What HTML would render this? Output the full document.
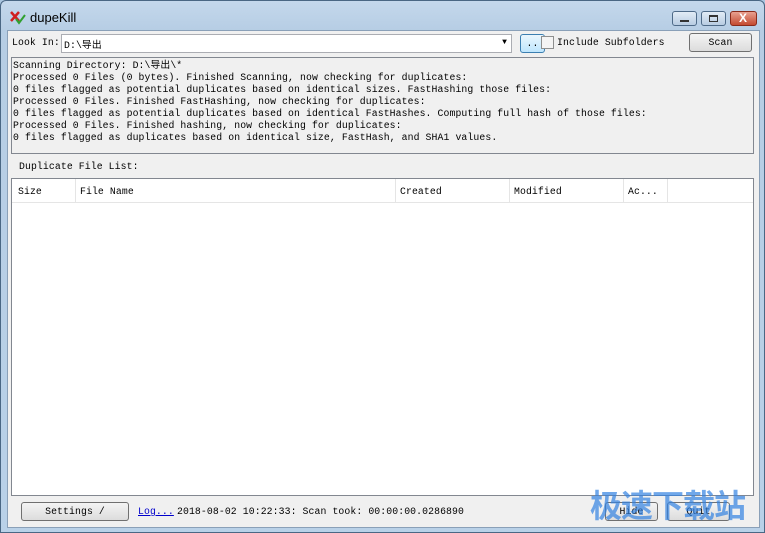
<!DOCTYPE html>
<html><head><meta charset="utf-8"><style>
body{margin:0;width:765px;height:533px;overflow:hidden;background:#aac6e0;font-family:"Liberation Mono","Noto Sans CJK SC",monospace;font-size:9.8px;letter-spacing:0.1px;color:#000}
.win{position:absolute;left:0;top:0;width:765px;height:533px;background:linear-gradient(#c4d8ec,#b6cde4 30px,#b9d1e8);border:1px solid #4a6784;box-sizing:border-box;border-radius:6px 6px 0 0}
.client{position:absolute;left:7px;top:30px;width:751px;height:496px;background:#f0f0f0;border:1px solid #8aa0b8}
.abs{position:absolute}
.btn{position:absolute;background:linear-gradient(#f4f4f4,#dcdcdc);border:1px solid #707070;border-radius:3px;text-align:center;box-sizing:border-box}
.title{left:29px;top:9px;font-family:"Liberation Sans",sans-serif;font-size:13px;letter-spacing:0;color:#000}
.cap{position:absolute;top:10px;width:25px;height:15px;border:1px solid #4e6a88;border-radius:3px;background:linear-gradient(#e2ecf6,#b8cce2);box-sizing:border-box}
</style></head><body>
<div class="win">
<div class="abs" style="left:9px;top:9px;width:14px;height:14px">
<svg width="16" height="16"><path d="M1 2L9 11M9 2L1 11" stroke="#d02020" stroke-width="2.5"/><path d="M6 9l3 4 6-8" stroke="#30a030" stroke-width="2" fill="none"/></svg></div>
<div class="abs title">dupeKill</div>
<div class="cap" style="left:671px"><div class="abs" style="left:7px;top:8px;width:9px;height:2px;background:#333"></div></div>
<div class="cap" style="left:700px"><div class="abs" style="left:7px;top:3px;width:9px;height:7px;border:1px solid #333;border-top-width:2px;box-sizing:border-box"></div></div>
<div class="cap" style="left:729px;width:27px;background:linear-gradient(#e8a090,#c44a30);border-color:#8a2a1a"><div class="abs" style="left:8px;top:-1px;color:#fff;font:bold 12px 'Liberation Sans',sans-serif">X</div></div>
</div>
<div class="client"></div>
<div class="abs" style="left:12px;top:37px">Look In:</div>
<div class="abs" style="left:61px;top:34px;width:451px;height:19px;background:#fff;border:1px solid #abadb3;box-sizing:border-box;padding:2px 2px">D:\导出<span class="abs" style="right:4px;top:3px;font-size:8px">▼</span></div>
<div class="btn" style="left:520px;top:34px;width:25px;height:19px;border-color:#3c7fb1;background:linear-gradient(#eaf6fd,#bee6fd);padding-top:3px">..</div>
<div class="abs" style="left:541px;top:36px;width:11px;height:11px;border:1px solid #8e8f8f;background:#f4f4f4"></div>
<div class="abs" style="left:557px;top:37px">Include Subfolders</div>
<div class="btn" style="left:689px;top:33px;width:63px;height:19px;padding-top:3px">Scan</div>
<div class="abs" style="left:11px;top:57px;width:743px;height:97px;border:1px solid #828790;background:#f0f0f0;box-sizing:border-box;padding:2px 1px;line-height:12px;white-space:pre">Scanning Directory: D:\导出\*
Processed 0 Files (0 bytes). Finished Scanning, now checking for duplicates:
0 files flagged as potential duplicates based on identical sizes. FastHashing those files:
Processed 0 Files. Finished FastHashing, now checking for duplicates:
0 files flagged as potential duplicates based on identical FastHashes. Computing full hash of those files:
Processed 0 Files. Finished hashing, now checking for duplicates:
0 files flagged as duplicates based on identical size, FastHash, and SHA1 values.</div>
<div class="abs" style="left:19px;top:161px">Duplicate File List:</div>
<div class="abs" style="left:11px;top:178px;width:743px;height:318px;border:1px solid #828790;background:#fff;box-sizing:border-box">
<div class="abs" style="left:0;top:0;width:741px;height:23px;border-bottom:1px solid #e5e5e5;background:#fff"></div>
<div class="abs" style="left:6px;top:7px">Size</div>
<div class="abs" style="left:63px;top:0;height:23px;border-left:1px solid #e5e5e5"></div>
<div class="abs" style="left:68px;top:7px">File Name</div>
<div class="abs" style="left:383px;top:0;height:23px;border-left:1px solid #e5e5e5"></div>
<div class="abs" style="left:388px;top:7px">Created</div>
<div class="abs" style="left:497px;top:0;height:23px;border-left:1px solid #e5e5e5"></div>
<div class="abs" style="left:502px;top:7px">Modified</div>
<div class="abs" style="left:611px;top:0;height:23px;border-left:1px solid #e5e5e5"></div>
<div class="abs" style="left:616px;top:7px">Ac...</div>
<div class="abs" style="left:655px;top:0;height:23px;border-left:1px solid #e5e5e5"></div>
</div>
<div class="btn" style="left:21px;top:502px;width:108px;height:19px;padding-top:3px">Settings /</div>
<div class="abs" style="left:138px;top:506px;color:#0000cc;text-decoration:underline">Log...</div>
<div class="abs" style="left:177px;top:506px">2018-08-02 10:22:33: Scan took: 00:00:00.0286890</div>
<div class="btn" style="left:605px;top:502px;width:53px;height:19px;padding-top:3px">Hide</div>
<div class="btn" style="left:667px;top:502px;width:63px;height:19px;padding-top:3px">Quit</div>
<div class="abs" style="left:590px;top:481px;font:bold 32px 'Noto Sans CJK SC',sans-serif;color:rgba(50,130,225,0.7);letter-spacing:-1px">极速下载站</div>
</body></html>
